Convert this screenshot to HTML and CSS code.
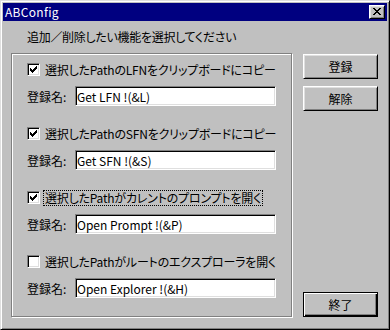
FILE: index.html
```html
<!DOCTYPE html>
<html lang="ja">
<head>
    <meta charset="UTF-8">
    <title>ABConfig</title>
    <link rel="stylesheet" href="styles.css">
</head>
<body>
<div class="window">
    <div class="titlebar">
        <span class="title">ABConfig</span>
        <button class="close" type="button" aria-label="閉じる">
            <svg width="8" height="7" viewBox="0 0 8 7" shape-rendering="crispEdges">
                <path d="M0 0h2v1h-2zM6 0h2v1h-2zM1 1h2v1h-2zM5 1h2v1h-2zM2 2h4v1h-4zM3 3h2v1h-2zM2 4h4v1h-4zM1 5h2v1h-2zM5 5h2v1h-2zM0 6h2v1h-2zM6 6h2v1h-2z" fill="#000"/>
            </svg>
        </button>
    </div>

    <div class="content">
        <p class="prompt">追加／削除したい機能を選択してください</p>

        <div class="main">
            <div class="group">
                <div class="option">
                    <div class="check-line">
                        <span class="check checked"></span>
                        <span class="check-label">選択したPathのLFNをクリップボードにコピー</span>
                    </div>
                    <div class="name-line">
                        <span class="name-label">登録名:</span>
                        <input class="name-input" type="text" value="Get LFN !(&amp;L)">
                    </div>
                </div>
                <div class="option">
                    <div class="check-line">
                        <span class="check checked"></span>
                        <span class="check-label">選択したPathのSFNをクリップボードにコピー</span>
                    </div>
                    <div class="name-line">
                        <span class="name-label">登録名:</span>
                        <input class="name-input" type="text" value="Get SFN !(&amp;S)">
                    </div>
                </div>
                <div class="option">
                    <div class="check-line">
                        <span class="check checked"></span>
                        <span class="check-label focused">選択したPathがカレントのプロンプトを開く</span>
                    </div>
                    <div class="name-line">
                        <span class="name-label">登録名:</span>
                        <input class="name-input" type="text" value="Open Prompt !(&amp;P)">
                    </div>
                </div>
                <div class="option">
                    <div class="check-line">
                        <span class="check"></span>
                        <span class="check-label">選択したPathがルートのエクスプローラを開く</span>
                    </div>
                    <div class="name-line">
                        <span class="name-label">登録名:</span>
                        <input class="name-input" type="text" value="Open Explorer !(&amp;H)">
                    </div>
                </div>
            </div>

            <div class="buttons">
                <button class="btn" type="button">登録</button>
                <button class="btn" type="button">解除</button>
                <button class="btn btn-default" type="button">終了</button>
            </div>
        </div>
    </div>
</div>
</body>
</html>
```

FILE: styles.css
```css
body {
    margin: 0;
    background-color: #c0c0c0;
    font-family: "MS UI Gothic", "Noto Sans CJK JP", sans-serif;
    font-size: 12px;
    color: #000;
}

/* Window frame (3px classic border) */
.window {
    width: 390px;
    height: 330px;
    box-sizing: border-box;
    border: 1px solid;
    border-color: #dfdfdf #000 #000 #dfdfdf;
    box-shadow: inset 1px 1px #fff, inset -1px -1px #808080;
    padding: 2px;
    background-color: #c0c0c0;
    display: flex;
    flex-direction: column;
}

.titlebar {
    height: 18px;
    background-color: #000080;
    color: #fff;
    display: flex;
    align-items: center;
    justify-content: space-between;
    padding: 0 2px 0 2px;
    flex-shrink: 0;
}

.title {
    line-height: 18px;
    letter-spacing: 0.3px;
}

.close {
    width: 16px;
    height: 14px;
    padding: 0;
    margin: 0;
    background-color: #c0c0c0;
    border: 1px solid;
    border-color: #fff #000 #000 #fff;
    box-shadow: inset 1px 1px #dfdfdf, inset -1px -1px #808080;
    display: flex;
    align-items: center;
    justify-content: center;
}

.close svg {
    display: block;
    margin: 0 1px 1px 0;
}

.content {
    padding: 8px 0 0 8px;
    flex: 1;
}

.prompt {
    margin: 0 0 8px 16px;
    line-height: 16px;
    font-feature-settings: "palt";
    letter-spacing: -0.3px;
}

.main {
    display: flex;
    align-items: stretch;
}

/* Etched group box */
.group {
    width: 281px;
    height: 264px;
    box-sizing: border-box;
    border: 1px solid #808080;
    box-shadow: inset 1px 1px #fff, 1px 1px #fff;
    padding: 8px 0 0 15px;
}

.option {
    margin-bottom: 20px;
}

.check-line {
    height: 15px;
    display: flex;
    align-items: center;
}

.check {
    width: 13px;
    height: 13px;
    box-sizing: border-box;
    border: 1px solid;
    border-color: #808080 #fff #fff #808080;
    box-shadow: inset 1px 1px #000, inset -1px -1px #dfdfdf;
    background-color: #fff;
    flex-shrink: 0;
}

.check.checked {
    background-image: url("data:image/svg+xml,%3Csvg xmlns='http://www.w3.org/2000/svg' width='7' height='7' shape-rendering='crispEdges'%3E%3Cpath d='M6 0h1v1h-1zM5 1h2v1h-2zM0 2h1v1h-1zM4 2h3v1h-3zM0 3h2v1h-2zM3 3h3v1h-3zM0 4h5v1h-5zM1 5h3v1h-3zM2 6h1v1h-1z' fill='%23000'/%3E%3C/svg%3E");
    background-repeat: no-repeat;
    background-position: 2px 2px;
}

.check-label {
    margin-left: 4px;
    padding: 0 1px;
    line-height: 14px;
    font-feature-settings: "palt";
    letter-spacing: -0.2px;
}

.check-label.focused {
    outline: 1px dotted #000;
}

.name-line {
    display: flex;
    align-items: center;
    margin-top: 9px;
}

.name-label {
    width: 48px;
    font-feature-settings: "palt";
}

.name-input {
    width: 201px;
    height: 20px;
    box-sizing: border-box;
    margin: 0;
    padding: 0 0 0 1px;
    border: 1px solid;
    border-color: #808080 #fff #fff #808080;
    box-shadow: inset 1px 1px #000, inset -1px -1px #dfdfdf;
    background-color: #fff;
    font-family: "MS UI Gothic", "Noto Sans CJK JP", sans-serif;
    font-size: 12px;
    color: #000;
    outline: none;
}

.buttons {
    display: flex;
    flex-direction: column;
    gap: 7px;
    margin: 1px 0 0 11px;
}

.btn {
    width: 75px;
    height: 25px;
    margin: 0;
    padding: 0;
    background-color: #c0c0c0;
    border: 1px solid;
    border-color: #fff #000 #000 #fff;
    box-shadow: inset 1px 1px #dfdfdf, inset -1px -1px #808080;
    font-family: "MS UI Gothic", "Noto Sans CJK JP", sans-serif;
    font-size: 12px;
    color: #000;
}

.btn-default {
    margin-top: auto;
    border-color: #000;
    box-shadow: inset 1px 1px #fff, inset -1px -1px #000, inset -2px -2px #808080;
}
```
